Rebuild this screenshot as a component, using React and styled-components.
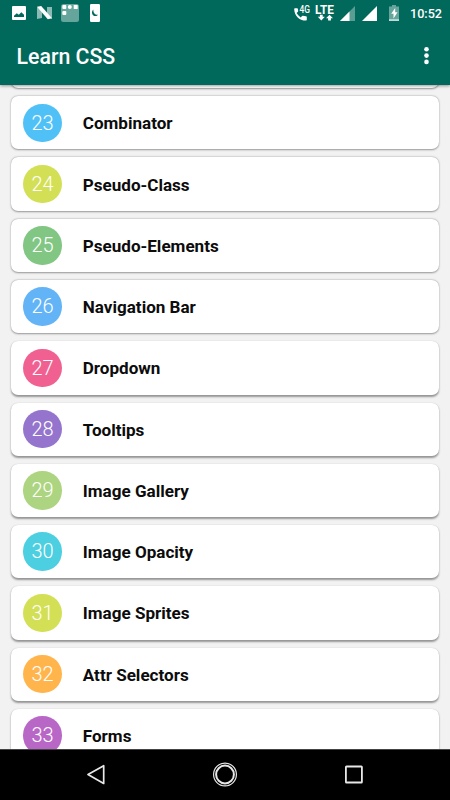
import React from 'react'
import styled, { createGlobalStyle } from 'styled-components'

const colors = {
  teal: '#00695b',
  background: '#f2f2f2',
  text: '#0c0c0c',
}

const lessons = [
  { number: 23, title: 'Combinator', color: '#4fc1f7' },
  { number: 24, title: 'Pseudo-Class', color: '#d3e055' },
  { number: 25, title: 'Pseudo-Elements', color: '#81c683' },
  { number: 26, title: 'Navigation Bar', color: '#63b4f6' },
  { number: 27, title: 'Dropdown', color: '#f06191' },
  { number: 28, title: 'Tooltips', color: '#9474cc' },
  { number: 29, title: 'Image Gallery', color: '#add480' },
  { number: 30, title: 'Image Opacity', color: '#4ccfe0' },
  { number: 31, title: 'Image Sprites', color: '#d3e055' },
  { number: 32, title: 'Attr Selectors', color: '#ffb54c' },
  { number: 33, title: 'Forms', color: '#b967c7' },
]

const GlobalStyle = createGlobalStyle`
  body {
    margin: 0;
    font-family: Roboto, sans-serif;
  }
  * {
    box-sizing: border-box;
  }
`

const Screen = styled.div`
  display: flex;
  flex-direction: column;
  width: 450px;
  height: 800px;
  overflow: hidden;
  background: ${colors.background};
`

const Header = styled.header`
  position: relative;
  z-index: 1;
  flex: none;
  height: 85px;
  background: ${colors.teal};
  box-shadow: 0 1px 3px rgba(0, 0, 0, 0.4);
`

const StatusBar = styled.div`
  display: flex;
  justify-content: space-between;
  height: 26px;
  padding: 0 8px 0 12px;
`

const StatusGroup = styled.div`
  display: flex;
  align-items: flex-start;
`

const StatusIcon = styled.svg`
  display: block;
  flex: none;
  margin-right: ${(props) => props.$after || 0}px;
  fill: #fff;
  text {
    font-family: Roboto, sans-serif;
  }
`

const Clock = styled.span`
  width: 32px;
  color: #fff;
  font-size: 12.6px;
  font-weight: 500;
  line-height: 27px;
  white-space: nowrap;
`

const Toolbar = styled.div`
  display: flex;
  align-items: center;
  justify-content: space-between;
  height: 59px;
  padding: 0 21px 0 16.5px;
`

const Title = styled.h1`
  margin: 0;
  padding-top: 2px;
  color: #fff;
  font-size: 21.3px;
  font-weight: 500;
  line-height: 26px;
`

const List = styled.main`
  flex: 1;
  min-height: 0;
  overflow: hidden;
  padding: 0 11px;
`

const Cards = styled.div`
  display: flex;
  flex-direction: column;
  gap: 8px;
  margin-top: -50.1px;
`

// the shadow drops further the lower the card sits on screen
const Card = styled.div`
  display: flex;
  align-items: center;
  flex: none;
  height: 53.27px;
  padding-left: 12.4px;
  border-radius: 7px;
  background: #fff;
  box-shadow: 0 ${(props) => 0.6 + props.$depth * 0.13}px 2px rgba(0, 0, 0, 0.38),
    0 0 1px rgba(0, 0, 0, 0.12);
`

const Badge = styled.div`
  width: 38.4px;
  height: 38.4px;
  margin-right: 21px;
  border-radius: 50%;
  background: ${(props) => props.$color};
  color: #fff;
  font-size: 20px;
  font-weight: 300;
  line-height: 38.4px;
  text-align: center;
`

const Name = styled.span`
  padding-top: 1px;
  color: ${colors.text};
  font-size: 17.07px;
  font-weight: 700;
  line-height: 22px;
`

const NavBar = styled.nav`
  position: relative;
  z-index: 1;
  display: flex;
  flex: none;
  align-items: center;
  justify-content: space-between;
  height: 51px;
  padding: 0 87px 0 86px;
  border-top: 1px solid #444;
  background: #000;
`

const NavIcon = styled.svg`
  display: block;
  fill: none;
  stroke: #e8e8e8;
`

const Notifications = () => (
  <StatusGroup>
    <StatusIcon width="14" height="26" $after={11}>
      <path
        fillRule="evenodd"
        d="M1 6h12q1 0 1 1v12q0 1-1 1H1q-1 0-1-1V7q0-1 1-1zM2 17h10v-2.200L9.300 12.300l-2.500 2.500L4.800 13.300 2 15.800z"
      />
    </StatusIcon>
    <StatusIcon width="15" height="26" $after={9}>
      <path opacity=".55" d="M0 7l5 3v8l-5 1zM10 7h5v12l-5-3z" />
      <path d="M0 6.800L4.200 6 15 18.200 10.800 19.200z" />
    </StatusIcon>
    <StatusIcon width="18" height="26" $after={11}>
      <rect y="4" width="18" height="18" rx="2.5" opacity=".4" />
      <rect x="1.3" y="5" width="4" height="4" rx="1" />
      <circle cx="8.8" cy="7" r="2" />
      <rect x="12.7" y="5" width="4" height="4" rx=".5" />
      <rect x="1.300" y="11" width="4" height="4" rx="1" />
    </StatusIcon>
    <StatusIcon width="10" height="26">
      <rect y="4" width="10" height="18" rx="1.2" />
      <path fill={colors.teal} d="M3.400 9.400C.8 11.600 2 15.900 5.200 16c1.200.1 2.200-.5 2.800-1.300-3.200.1-5-2.300-4.600-5.300z" />
    </StatusIcon>
  </StatusGroup>
)

const Signals = () => (
  <StatusGroup>
    <StatusIcon width="17" height="26" $after={4}>
      <path d="M.9 8.200h2.300q.6 0 .7.7l.3 2.200q0 .4-.3.7l-1.300 1.300q1.500 2.800 4.100 4.300l1.400-1.400q.3-.3.7-.2l3.200.5q.8.1.8.7v2.800q0 .8-.8.8C5.100 20.600.2 15.200.2 8.900q0-.7.7-.7z" />
      <text x="5.600" y="13.200" fontSize="10" fontWeight="500" textLength="10.500" lengthAdjust="spacingAndGlyphs">
        4G
      </text>
    </StatusIcon>
    <StatusIcon width="20" height="26" $after={5}>
      <text x="0" y="13.900" fontSize="12.500" fontWeight="700" textLength="19" lengthAdjust="spacingAndGlyphs">
        LTE
      </text>
      <path d="M4.900 14.800h2.800v2h2.100l-3.500 3.800-3.500-3.800h2.100zM13.100 20.600v-2.300H11l3.500-3.600 3.500 3.600h-2.100v2.300z" />
    </StatusIcon>
    <StatusIcon width="15" height="26" $after={7}>
      <path opacity=".35" d="M15 6v15H0z" />
      <path d="M9.500 11.500V21H0z" />
    </StatusIcon>
    <StatusIcon width="15" height="26" $after={12}>
      <path d="M15 6v15H0z" />
    </StatusIcon>
    <StatusIcon width="10" height="26" $after={11}>
      <path opacity=".4" d="M3 5h4v1.500h3V20H0V6.500h3z" />
      <path d="M6.200 8L2.200 13.800h2.300v4.700l4-6.200H6.200zM0 19.600h10v1.200H0z" />
    </StatusIcon>
    <Clock>10:52</Clock>
  </StatusGroup>
)

const Lesson = ({ number, title, color, depth }) => (
  <Card $depth={depth}>
    <Badge $color={color}>{number}</Badge>
    <Name>{title}</Name>
  </Card>
)

const App = () => (
  <Screen>
    <GlobalStyle />
    <Header>
      <StatusBar>
        <Notifications />
        <Signals />
      </StatusBar>
      <Toolbar>
        <Title>Learn CSS</Title>
        <svg width="5" height="20" fill="#fff">
          <circle cx="2.500" cy="3.300" r="2.300" />
          <circle cx="2.500" cy="9.600" r="2.300" />
          <circle cx="2.500" cy="15.900" r="2.300" />
        </svg>
      </Toolbar>
    </Header>
    <List>
      <Cards>
        <Card $depth={0} />
        {lessons.map((lesson, index) => (
          <Lesson key={lesson.number} depth={index} {...lesson} />
        ))}
      </Cards>
    </List>
    <NavBar>
      <NavIcon width="20" height="26" strokeWidth="1.700" strokeLinejoin="round">
        <path d="M17.700 3.700v17.700L2 12.500z" />
      </NavIcon>
      <NavIcon width="26" height="26">
        <circle cx="12" cy="12.500" r="11.400" strokeWidth="1.200" />
        <circle cx="12" cy="12.500" r="8.900" strokeWidth="2" />
      </NavIcon>
      <NavIcon width="18" height="26" strokeWidth="1.800">
        <rect x=".9" y="4.500" width="16" height="16" rx=".6" />
      </NavIcon>
    </NavBar>
  </Screen>
)

export default App
